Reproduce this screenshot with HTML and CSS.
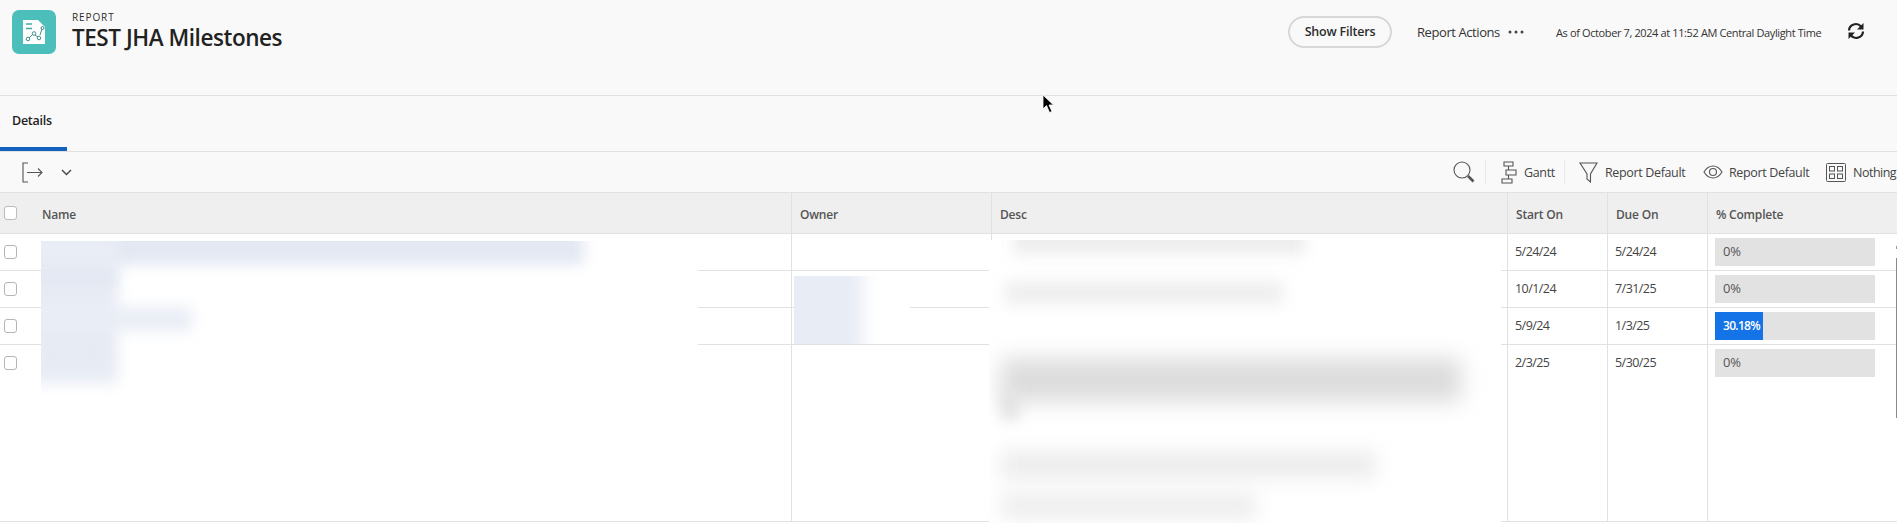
FILE: index.html
```html
<!DOCTYPE html>
<html lang="en">
<head>
<meta charset="utf-8">
<title>TEST JHA Milestones</title>
<link rel="stylesheet" href="styles.css">
</head>
<body>
<div class="page">
  <header class="top">
    <div class="logo">
      <svg width="24" height="26" viewBox="0 0 24 26">
        <path d="M1 1H16L23 8V25H1Z" fill="#fff"/>
        <path d="M4 5H10M4 9.500H10" stroke="#3fa9a5" stroke-width="1.600"/>
        <path d="M7 19L11 15M13 16L16 18M18 16L20 10" stroke="#3f8f8c" stroke-width="1" fill="none"/>
        <circle cx="6" cy="20" r="1.800" fill="none" stroke="#3f8f8c"/>
        <circle cx="12" cy="14.500" r="1.800" fill="none" stroke="#3f8f8c"/>
        <circle cx="17" cy="19" r="1.800" fill="none" stroke="#3f8f8c"/>
        <circle cx="20.500" cy="9" r="1.500" fill="none" stroke="#3f8f8c"/>
      </svg>
    </div>
    <div class="titles">
      <div class="eyebrow">REPORT</div>
      <h1 class="title">TEST JHA Milestones</h1>
    </div>
    <div class="top-actions">
      <button class="pill">Show Filters</button>
      <span class="actions-label">Report Actions</span>
      <svg class="dots" width="16" height="4" viewBox="0 0 16 4"><circle cx="2" cy="2" r="1.500"/><circle cx="8" cy="2" r="1.500"/><circle cx="14" cy="2" r="1.500"/></svg>
      <span class="asof">As of October 7, 2024 at 11:52 AM Central Daylight Time</span>
      <svg class="refresh" width="18" height="18" viewBox="0 0 18 18" fill="none" stroke="#222" stroke-width="2.200">
        <path d="M2 8.500A6.800 6.800 0 0 1 14 4.500"/>
        <path d="M16 9.500A6.800 6.800 0 0 1 4 13.500"/>
        <path d="M16.500 1V7.500H10Z" fill="#222" stroke="none"/>
        <path d="M1.500 17V10.500H8Z" fill="#222" stroke="none"/>
      </svg>
    </div>
  </header>

  <nav class="tabs"><div class="tab">Details</div></nav>

  <div class="toolbar">
    <div class="tool-left">
      <svg width="21" height="21" viewBox="0 0 21 21" fill="none" stroke="#555" stroke-width="1.100">
        <path d="M6 1H1V20H6"/><path d="M5 10.500H20M16 6.500L20 10.500L16 14.500"/>
      </svg>
      <svg class="chev" width="11" height="7" viewBox="0 0 11 7" fill="none" stroke="#444" stroke-width="1.400"><path d="M1 1L5.500 5.500L10 1"/></svg>
    </div>
    <div class="tool-right">
      <svg class="i-search" width="22" height="22" viewBox="0 0 22 22" fill="none" stroke="#555" stroke-width="1.100">
        <circle cx="9" cy="9" r="8"/><path d="M15 15L20.500 20.500" stroke-width="2.600"/>
      </svg>
      <span class="divider d1"></span>
      <svg class="i-gantt" width="16" height="23" viewBox="0 0 16 23" fill="none" stroke="#555" stroke-width="1.100">
        <path d="M3 1H12V5H3ZM5 9H15V14H5ZM1 18H11V22H1ZM7.500 5V9M7.500 14V18"/>
      </svg>
      <span class="tool-text t-gantt">Gantt</span>
      <span class="divider d2"></span>
      <svg class="i-funnel" width="19" height="21" viewBox="0 0 19 21" fill="none" stroke="#555" stroke-width="1.100">
        <path d="M1 1H18L11.500 12V20L8 17V12Z"/>
      </svg>
      <span class="tool-text t-filter">Report Default</span>
      <svg class="i-eye" width="20" height="14" viewBox="0 0 20 14" fill="none" stroke="#555" stroke-width="1.100">
        <path d="M1 7C4 2 7 1 10 1S16 2 19 7C16 12 13 13 10 13S4 12 1 7Z"/><circle cx="10" cy="7" r="3.500"/>
      </svg>
      <span class="tool-text t-view">Report Default</span>
      <svg class="i-group" width="20" height="19" viewBox="0 0 20 19" fill="none" stroke="#555" stroke-width="1">
        <rect x="0.500" y="0.500" width="19" height="18" rx="1"/><rect x="3.500" y="3.500" width="5" height="4.500"/><rect x="11.500" y="3.500" width="5" height="4.500"/><rect x="3.500" y="11" width="5" height="4.500"/><rect x="11.500" y="11" width="5" height="4.500"/>
      </svg>
      <span class="tool-text t-group">Nothing</span>
    </div>
  </div>

  <div class="grid">
    <div class="hcell c-name"><span class="box hbox"></span><span class="hname">Name</span></div>
    <div class="hcell c-owner">Owner</div>
    <div class="hcell c-desc">Desc</div>
    <div class="hcell c-date">Start On</div>
    <div class="hcell c-date">Due On</div>
    <div class="hcell c-pct">% Complete</div>

    <div class="cell c-name"><span class="box"></span></div>
    <div class="cell c-owner"></div>
    <div class="cell c-desc"></div>
    <div class="cell c-date">5/24/24</div>
    <div class="cell c-date">5/24/24</div>
    <div class="cell c-pct"><div class="bar"><span class="bar-text">0%</span></div></div>

    <div class="cell c-name"><span class="box"></span></div>
    <div class="cell c-owner"></div>
    <div class="cell c-desc"></div>
    <div class="cell c-date">10/1/24</div>
    <div class="cell c-date">7/31/25</div>
    <div class="cell c-pct"><div class="bar"><span class="bar-text">0%</span></div></div>

    <div class="cell c-name"><span class="box"></span></div>
    <div class="cell c-owner"></div>
    <div class="cell c-desc"></div>
    <div class="cell c-date">5/9/24</div>
    <div class="cell c-date">1/3/25</div>
    <div class="cell c-pct"><div class="bar"><div class="fill">30.18%</div></div></div>

    <div class="cell tall c-name"><span class="box"></span></div>
    <div class="cell tall c-owner"></div>
    <div class="cell tall c-desc"></div>
    <div class="cell tall c-date">2/3/25</div>
    <div class="cell tall c-date">5/30/25</div>
    <div class="cell tall c-pct"><div class="bar"><span class="bar-text">0%</span></div></div>
  </div>

  <div class="mask m-name">
    <i class="smear s1"></i><i class="smear s2"></i><i class="smear s3"></i><i class="smear s4"></i><i class="smear s6"></i>
  </div>
  <div class="mask m-owner"><i class="smear s5"></i></div>
  <div class="mask m-desc">
    <i class="smear g1"></i><i class="smear g2"></i><i class="smear g3"></i><i class="smear g3b"></i><i class="smear g4"></i><i class="smear g5"></i>
  </div>

  <span class="scroll-tick"></span>
  <span class="scroll-thumb"></span>

  <svg class="cursor" width="12" height="20" viewBox="0 0 12 20">
    <path d="M1 1V15L4.500 11.500L7.500 18.500L10 17.500L7 11H11.500Z" fill="#000" stroke="#fff" stroke-width="0.800"/>
  </svg>
</div>
</body>
</html>
```
FILE: styles.css
```css
* { box-sizing: border-box; }
html, body { margin: 0; padding: 0; }
body {
  background: #fff;
  font-family: "Open Sans", "Noto Sans", sans-serif;
  color: #2c2c2c;
  overflow: hidden;
}
.page { position: relative; width: 1897px; height: 523px; overflow: hidden; background: #fff; }

.top {
  height: 96px;
  background: #f9f9f9;
  border-bottom: 1px solid #e1e1e1;
  display: flex;
  align-items: flex-start;
  padding: 10px 0 0 12px;
}
.logo {
  width: 44px;
  height: 44px;
  border-radius: 7px;
  background: #4cbfba;
  display: flex;
  align-items: center;
  justify-content: center;
}
.titles { margin-left: 16px; }
.eyebrow { font-size: 10px; line-height: 14px; letter-spacing: 0.9px; font-weight: 500; color: #2c2c2c; }
.title { margin: 1px 0 0; font-size: 22.500px; line-height: 26px; font-weight: 600; letter-spacing: -0.45px; color: #222; }
.top-actions { margin-left: auto; display: flex; align-items: center; height: 38px; margin-top: 3px; }
.pill {
  width: 104px;
  height: 32px;
  margin-right: 25px;
  border: 2px solid #d8d8d8;
  border-radius: 16px;
  background: #f9f9f9;
  font: 600 12.500px "Open Sans", sans-serif;
  letter-spacing: -0.2px;
  color: #2c2c2c;
  padding: 0 0 2px;
}
.actions-label { width: 91px; font-size: 13px; letter-spacing: -0.42px; color: #333; white-space: nowrap; }
.dots { fill: #444; margin-right: 32px; }
.asof { width: 291px; font-size: 11px; letter-spacing: -0.38px; white-space: nowrap; color: #333; }
.refresh { margin-right: 32px; margin-top: -2px; }

.tabs { height: 56px; background: #f9f9f9; border-bottom: 1px solid #e1e1e1; }
.tab {
  width: 67px;
  height: 55px;
  padding: 16px 0 0 12px;
  font-size: 12.500px;
  line-height: 18px;
  font-weight: 600;
  letter-spacing: -0.25px;
  color: #222;
  border-bottom: 4px solid #1462c0;
}

.toolbar {
  height: 41px;
  background: #f9f9f9;
  border-bottom: 1px solid #e1e1e1;
  display: flex;
  justify-content: space-between;
  align-items: center;
}
.tool-left { display: flex; align-items: center; padding-left: 22px; }
.chev { margin-left: 18px; }
.tool-right { display: flex; align-items: center; width: 444px; flex: none; }
.tool-text { font-size: 12.500px; letter-spacing: -0.35px; color: #444; white-space: nowrap; }
.divider { width: 1px; height: 24px; background: #e8e8e8; flex: none; }
.d1 { margin: 0 15px 0 10px; }
.i-gantt { flex: none; }
.t-gantt { margin-left: 7px; width: 32px; }
.d2 { margin: 0 14px 0 8px; }
.i-funnel { flex: none; }
.t-filter { margin-left: 7px; width: 80px; }
.i-eye { flex: none; margin-left: 18px; }
.t-view { margin-left: 6px; width: 79px; }
.i-group { flex: none; margin-left: 18px; }
.t-group { margin-left: 7px; letter-spacing: -0.5px; }
.i-search { flex: none; }

.grid {
  display: grid;
  grid-template-columns: 792px 200px 516px 100px 100px 189px;
  grid-template-rows: 41px 37px 37px 37px 177px;
}
.hcell {
  background: #efefef;
  border-bottom: 1px solid #e1e1e1;
  border-right: 1px solid #e1e1e1;
  display: flex;
  align-items: center;
  font-size: 12px;
  font-weight: 600;
  letter-spacing: -0.2px;
  color: #555;
  padding: 2px 0 0 8px;
}
.cell {
  background: #fff;
  border-bottom: 1px solid #e1e1e1;
  border-right: 1px solid #e1e1e1;
  padding: 8px 0 0 7px;
  font-size: 12.500px;
  line-height: 20px;
  letter-spacing: -0.55px;
  color: #444;
}
.hcell.c-name { padding-left: 4px; }
.hcell.c-pct, .cell.c-pct { border-right: 0; }
.cell.c-name { padding: 11px 0 0 4px; }
.cell.c-pct { padding: 4px 0 0 7px; }
.tall { border-bottom: 1px solid #e1e1e1; }
.box {
  display: block;
  width: 13px;
  height: 14px;
  background: #fff;
  border: 1px solid #b5b5b5;
  border-radius: 3px;
}
.hbox { border-color: #bbb; margin-top: -2px; }
.hname { margin-left: 25px; }
.bar { width: 160px; height: 28px; background: #e2e2e2; }
.bar-text { display: block; padding: 3px 0 0 8px; color: #555; font-size: 13px; line-height: 20px; letter-spacing: -0.2px; }
.fill {
  height: 28px;
  width: 48px;
  background: #1473e6;
  color: #fff;
  font-size: 12px;
  font-weight: 600;
  line-height: 28px;
  letter-spacing: -0.7px;
  padding-left: 8px;
  white-space: nowrap;
}

.mask { position: absolute; background: #fff; overflow: hidden; }
.m-name { left: 41px; top: 241px; width: 657px; height: 154px; }
.m-owner { left: 794px; top: 276px; width: 116px; height: 68px; }
.m-desc { left: 989px; top: 240px; width: 512px; height: 283px; }
.smear { position: absolute; display: block; }
.s1 { left: -15px; top: -14px; width: 558px; height: 38px; background: #e3e8f2; filter: blur(7px); }
.s2 { left: -15px; top: -5px; width: 92px; height: 148px; background: #e9edf5; filter: blur(7px); }
.s3 { left: -15px; top: 66px; width: 166px; height: 24px; background: #e9edf5; filter: blur(7px); }
.s4 { left: -15px; top: 26px; width: 90px; height: 22px; background: #e4e8f2; filter: blur(6px); }
.s6 { left: 0; top: 100px; width: 68px; height: 24px; background: #e6eaf3; filter: blur(6px); }
.s5 { left: -15px; top: -14px; width: 84px; height: 100px; background: #e7ecf5; filter: blur(9px); }
.g1 { left: 24px; top: -12px; width: 292px; height: 26px; background: #ececec; filter: blur(8px); }
.g2 { left: 16px; top: 42px; width: 278px; height: 22px; background: #ededed; filter: blur(8px); }
.g3 { left: 12px; top: 118px; width: 460px; height: 44px; background: #dcdcdc; filter: blur(11px); }
.g3b { left: 12px; top: 150px; width: 18px; height: 30px; background: #e2e2e2; filter: blur(7px); }
.g4 { left: 12px; top: 212px; width: 375px; height: 26px; background: #ebebeb; filter: blur(10px); }
.g5 { left: 12px; top: 254px; width: 255px; height: 24px; background: #ececec; filter: blur(10px); }

.scroll-tick { position: absolute; left: 1896px; top: 246px; width: 1px; height: 3px; background: #999; }
.scroll-thumb { position: absolute; left: 1896px; top: 258px; width: 1px; height: 160px; background: #8a8a8a; }
.cursor { position: absolute; left: 1042px; top: 94px; }
```
